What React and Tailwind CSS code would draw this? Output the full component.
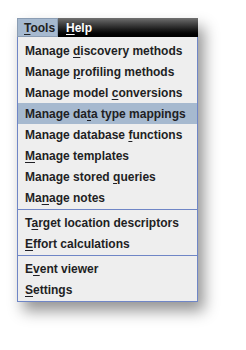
export default function App() {
  const items = [
    ["Manage ", "d", "iscovery methods"],
    ["Manage ", "p", "rofiling methods"],
    ["Manage model ", "c", "onversions"],
    ["Manage da", "t", "a type mappings", true],
    ["Manage database ", "f", "unctions"],
    ["", "M", "anage templates"],
    ["Manage stored ", "q", "ueries"],
    ["Ma", "n", "age notes"],
    "sep",
    ["T", "a", "rget location descriptors"],
    ["", "E", "ffort calculations"],
    "sep",
    ["E", "v", "ent viewer"],
    ["", "S", "ettings"],
  ];

  return (
    <div
      className="w-[246px] h-[350px] bg-white pt-[18px] pl-[17px]"
      style={{ fontFamily: '"Liberation Sans", Arial, sans-serif' }}
    >
      <div className="w-[181px] shadow-[6px_9px_14px_rgba(0,0,0,0.42)]">
        {/* MENU BAR */}
        <div className="flex h-[19px] text-[12px] font-bold">
          <div className="w-[41px] bg-[#a6b9cf] border border-[#8b9db3] text-[#222] pl-[6px] flex items-center">
            <span>
              <u className="underline-offset-[2px]">T</u>ools
            </span>
          </div>
          <div className="flex-1 bg-gradient-to-b from-[#707070] via-[#2a2a2a] to-black text-white pl-[8px] flex items-center">
            <span>
              <u className="underline-offset-[2px]">H</u>elp
            </span>
          </div>
        </div>

        {/* DROPDOWN */}
        <div className="border-x border-b border-[#6f86c6] bg-[#eeeeee] pt-[3px] pb-px text-[12px] font-bold text-[#1f1f24]">
          {items.map((it, i) =>
            it === "sep" ? (
              <div key={i} className="pt-px pb-[2px]">
                <div className="h-px bg-[#6f86c6]" />
              </div>
            ) : (
              <div
                key={i}
                className={`h-[21px] pl-[7px] flex items-center whitespace-pre ${
                  it[3] ? "bg-[#a6b9cf]" : ""
                }`}
              >
                <span>
                  {it[0]}
                  <u className="underline-offset-[2px]">{it[1]}</u>
                  {it[2]}
                </span>
              </div>
            )
          )}
        </div>
      </div>
    </div>
  );
}
